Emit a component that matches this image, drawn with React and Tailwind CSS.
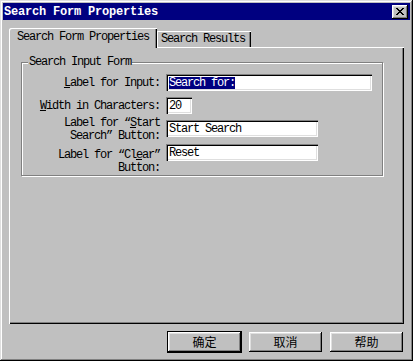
const mono = 'font-[Liberation_Mono,Courier_New,Noto_Sans_CJK_SC,monospace] text-[12px] leading-[12px] tracking-[-1.2px] text-black'
const cjk = 'font-[Noto_Sans_CJK_SC,sans-serif] text-[12px] leading-[12px] text-black'

const raised = 'shadow-[inset_-1px_-1px_#000,inset_1px_1px_#fff,inset_-2px_-2px_#808080,inset_2px_2px_#dfdfdf]'
const sunken = 'shadow-[inset_1px_1px_#808080,inset_2px_2px_#000,inset_-1px_-1px_#fff,inset_-2px_-2px_#dfdfdf]'

function Field({ width, children }) {
  return (
    <div className={`h-[17px] ${width} shrink-0 bg-white ${sunken} flex items-center pl-[3px] pt-[1px] overflow-hidden whitespace-nowrap ${mono}`}>
      {children}
    </div>
  )
}

function Button({ label, isDefault }) {
  return (
    <button
      type="button"
      className={`w-[75px] h-[22px] flex items-center justify-center bg-[#c0c0c0] ${
        isDefault ? 'border border-black' : 'border border-transparent'
      }`}
    >
      <span className={`w-full h-full flex items-center justify-center ${raised} ${cjk}`}>{label}</span>
    </button>
  )
}

export default function App() {
  return (
    <div className="w-[413px] h-[361px] bg-[#c0c0c0] p-[3px] flex flex-col shadow-[inset_-1px_-1px_#000,inset_1px_1px_#dfdfdf,inset_-2px_-2px_#808080,inset_2px_2px_#fff]">
      {/* title bar */}
      <div className="h-[17px] shrink-0 bg-[#000080] flex items-center justify-between pl-[1px] pr-[2px]">
        <span className="font-[Liberation_Mono,Courier_New,monospace] text-[12px] leading-[12px] font-bold tracking-[-0.2px] text-white">
          Search Form Properties
        </span>
        <button type="button" className={`w-[16px] h-[14px] bg-[#c0c0c0] flex items-center justify-center ${raised}`}>
          <svg width="8" height="7" viewBox="0 0 8 7" shapeRendering="crispEdges">
            <path d="M0 0h2v1H0zM6 0h2v1H6zM1 1h2v1H1zM5 1h2v1H5zM2 2h4v1H2zM3 3h2v1H3zM2 4h4v1H2zM1 5h2v1H1zM5 5h2v1H5zM0 6h2v1H0zM6 6h2v1H6z" fill="#000" />
          </svg>
        </button>
      </div>

      <div className="px-[6px] pt-[8px] flex flex-col">
        {/* tabs */}
        <div className="h-[19px] flex items-end">
          <div className={`relative z-10 w-[148px] h-[20px] -mb-[1px] bg-[#c0c0c0] rounded-tl-[2px] shadow-[inset_1px_1px_#fff,inset_-1px_0_#000,inset_-2px_0_#808080] pl-[8px] pt-[3px] whitespace-nowrap ${mono}`}>
            Search Form Properties
          </div>
          <div className={`w-[94px] h-[16px] bg-[#c0c0c0] shadow-[inset_1px_1px_#fff,inset_-1px_0_#000,inset_-2px_0_#808080] pl-[4px] pt-[2px] whitespace-nowrap ${mono}`}>
            Search Results
          </div>
        </div>

        {/* panel */}
        <div className="h-[277px] bg-[#c0c0c0] shadow-[inset_1px_1px_#fff,inset_-1px_-1px_#000,inset_-2px_-2px_#808080] pt-[15px] pl-[12px]">
          <div className="relative w-[362px] h-[114px] border border-[#808080] shadow-[1px_1px_0_#fff,inset_1px_1px_0_#fff] pt-[11px]">
            <span className={`absolute -top-[7px] left-[6px] px-[1px] bg-[#c0c0c0] whitespace-nowrap ${mono}`}>
              Search Input Form
            </span>

            <div className="flex flex-col gap-[6px]">
              <div className="h-[17px] flex items-center gap-[6px]">
                <div className={`w-[138px] text-right whitespace-nowrap ${mono}`}>
                  <u>L</u>abel for Input:
                </div>
                <Field width="w-[206px]">
                  <span className="bg-[#000080] text-white">Search for:</span>
                </Field>
              </div>

              <div className="h-[17px] flex items-center gap-[6px]">
                <div className={`w-[138px] text-right whitespace-nowrap ${mono}`}>
                  <u>W</u>idth in Characters:
                </div>
                <Field width="w-[26px]">20</Field>
              </div>

              <div className="h-[17px] flex items-start gap-[6px]">
                <div className={`w-[138px] -mt-[3px] text-right whitespace-nowrap ${mono} leading-[13px]`}>
                  Label for “<u>S</u>tart
                  <br />
                  Search” Button:
                </div>
                <Field width="w-[152px]">Start Search</Field>
              </div>

              <div className="h-[17px] mt-[1px] flex items-start gap-[6px]">
                <div className={`w-[138px] mt-[5px] text-right whitespace-nowrap ${mono} leading-[13px]`}>
                  Label for “Cl<u>e</u>ar”
                  <br />
                  Button:
                </div>
                <Field width="w-[152px]">Reset</Field>
              </div>
            </div>
          </div>
        </div>

        {/* dialog buttons */}
        <div className="mt-[7px] flex justify-end gap-[6px]">
          <Button label="确定" isDefault />
          <Button label="取消" />
          <Button label="帮助" />
        </div>
      </div>
    </div>
  )
}
